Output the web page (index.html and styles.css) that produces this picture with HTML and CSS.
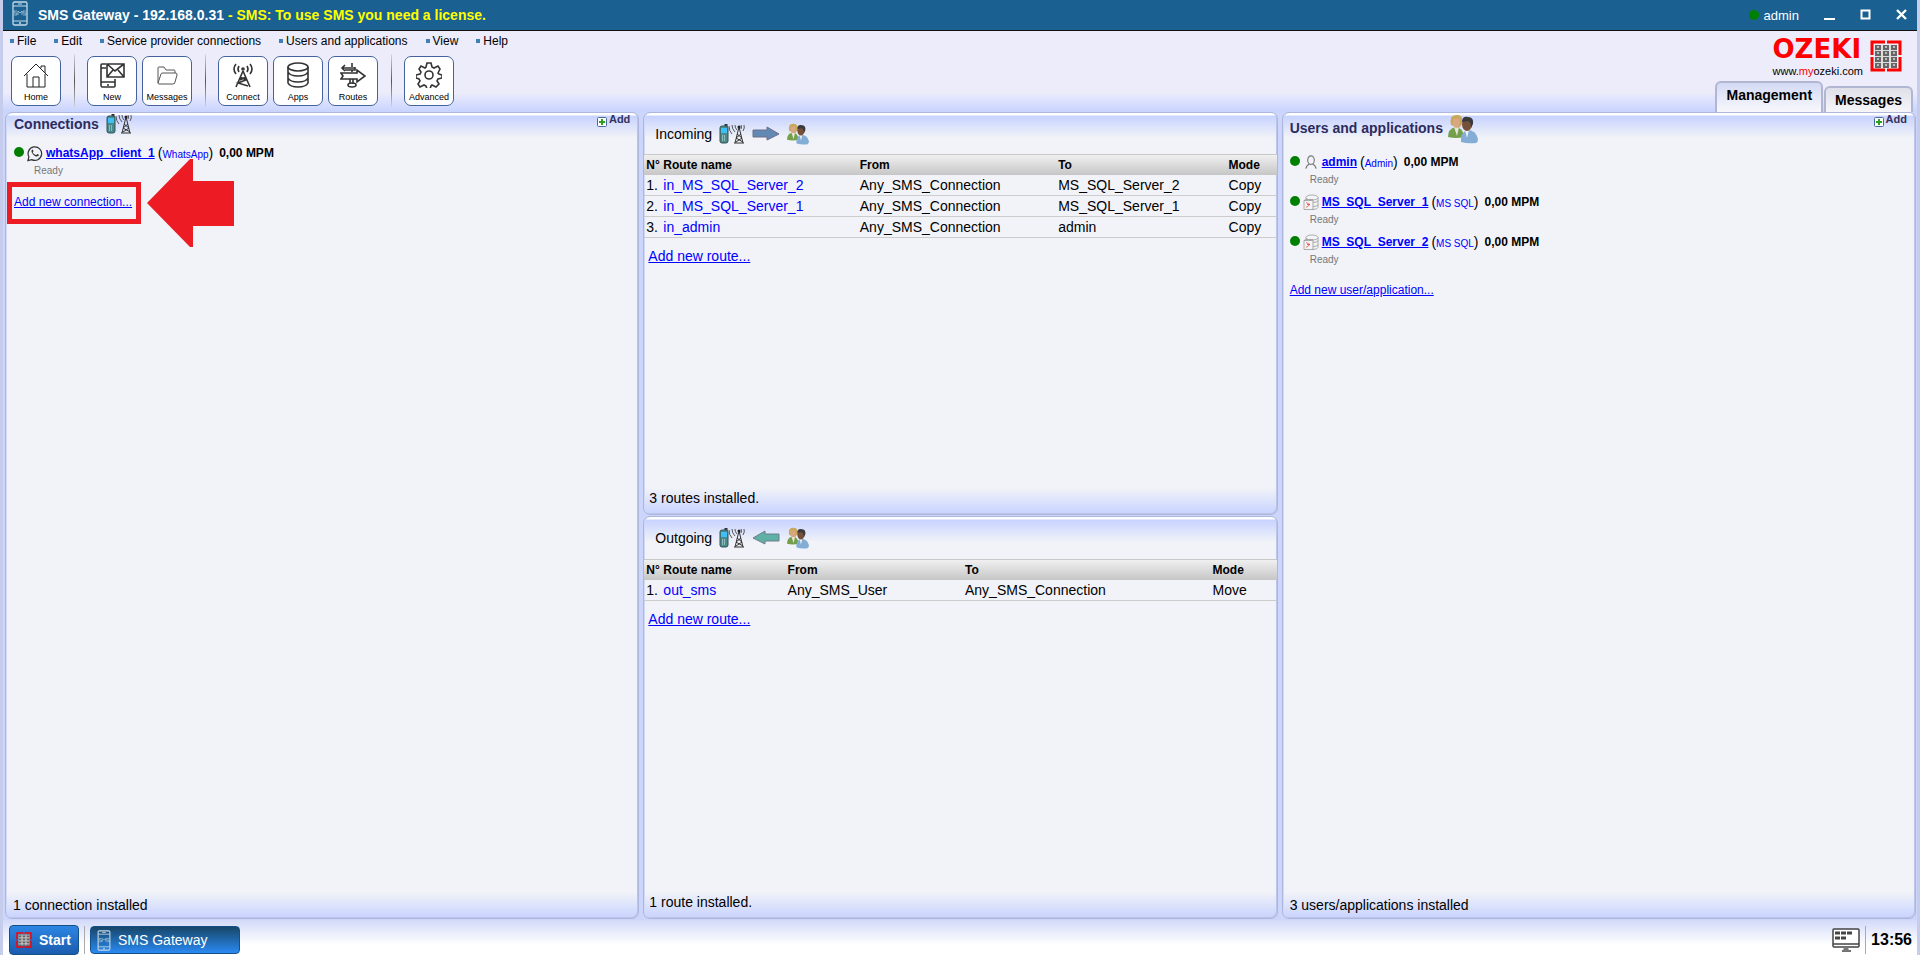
FILE: index.html
```
<!DOCTYPE html>
<html lang="en">
<head>
  <meta charset="UTF-8">
  <title>SMS Gateway</title>
  <link rel="stylesheet" href="styles.css">
</head>
<body>

  <!-- Shared drawings -->
  <svg class="defs" width="0" height="0" aria-hidden="true">
    <symbol id="tower" viewBox="0 0 26 20">
      <path d="M6 2V0h2v3" fill="#333" stroke="#333"/>
      <rect x="1" y="2" width="8" height="17" rx="2" fill="#4a8a8c" stroke="#2f5558"/>
      <rect x="2" y="4" width="6" height="5" fill="#3cc0f5"/>
      <path d="M3 12h4M3 14h4M3 16h4" stroke="#d5e8e8" stroke-dasharray="1 1"/>
      <path d="M10 2q0 5 3 8M13 1q0 4 3 7M16 1q0 3 2 5M25 1q1 3-1 6M22 1q1 2 0 4" fill="none" stroke="#555"/>
      <path d="M20 3l-4 16M20 3l4 16M18 10l5 4-6 4M22 10l-5 4 7 4M15 19h10" fill="none" stroke="#333"/>
      <circle cx="20" cy="3" r="1.500" fill="#222"/>
    </symbol>
    <symbol id="people" viewBox="0 0 30 30">
      <path d="M0 23q0-8 7-10 8 0 9 10-8 2-16 0z" fill="#74a04c"/>
      <path d="M6 13l3 9 2-9z" fill="#e6e6dc"/>
      <path d="M3 11Q1 1 8 1q8-1 6 9l-3 4z" fill="#c9a85c"/>
      <path d="M5 5q4 1 6-1 2 9-3 10-4-1-3-9z" fill="#d9a883"/>
      <path d="M13 28q-1-9 6-12 9 0 11 9 0 3-2 4-8 1-15-1z" fill="#84add6"/>
      <path d="M17 16l2 8 2-8z" fill="#eef2f8"/>
      <ellipse cx="19" cy="10" rx="5" ry="7" fill="#76513a"/>
      <path d="M14 8q0-6 6-5 6 0 5 7l-2 4q0-6-3-7z" fill="#3a3a3c"/>
    </symbol>
    <symbol id="phone" viewBox="0 0 16 25">
      <rect x="1" y="1" width="14" height="23" rx="1.500" fill="none" stroke="#c6d9e6" stroke-width="1.300"/>
      <path d="M1 5h14M1 20h14M6 3h4" fill="none" stroke="#c6d9e6"/>
      <circle cx="8" cy="22" r="1" fill="#c6d9e6"/>
      <path d="M5 10H2v2h3v2H2M6 14v-4l2 2 2-2v4M14 10h-3v2h3v2h-3" fill="none" stroke="#a9c6d8" stroke-width=".8"/>
    </symbol>
    <symbol id="keypad" viewBox="0 0 32 32">
      <path d="M5 5h22v22H5z" fill="#ddd"/>
      <path d="M15 2H2v13M17 2h13v13M2 17v13h13M30 17v13H17" fill="none" stroke="#f00" stroke-width="3"/>
      <path d="M8 5v23M16 5v23M24 5v23" stroke="#666" stroke-width="6" stroke-dasharray="5 1"/>
      <path d="M8 6v21M16 6v21M24 6v21" stroke="#bbb" stroke-width="2" stroke-dasharray="2 4"/>
    </symbol>
    <symbol id="plus" viewBox="0 0 10 10">
      <rect x=".5" y=".5" width="9" height="9" rx="1" fill="#fff" stroke="#4b6a9c"/>
      <path d="M5 2v6M2 5h6" stroke="#2ba320" stroke-width="2"/>
    </symbol>
    <symbol id="sql" viewBox="0 0 16 16">
      <g fill="#f4f4f6" stroke="#999" stroke-width=".8">
        <path d="M3 3v4h6v8q6 0 6-2V3"/>
        <ellipse cx="9" cy="3" rx="6" ry="2.500"/>
        <path d="M10 8q5 0 5-2M10 12q5 0 5-2" fill="none"/>
        <path d="M1 6h9v9H1zM1 6l2-1h7"/>
      </g>
      <path d="M3 8l4 2-4 3M7 10l-3 0" fill="none" stroke="#e35050" stroke-width=".8"/>
    </symbol>
  </svg>

  <header class="titlebar">
    <svg class="title-icon"><use href="#phone"/></svg>
    <h1>SMS Gateway - 192.168.0.31 <span>- SMS: To use SMS you need a license.</span></h1>
    <div class="session"><i class="dot"></i>admin</div>
    <button class="win" aria-label="Minimize"><svg width="12" height="12"><path d="M0 10h11" stroke="#fff" stroke-width="2"/></svg></button>
    <button class="win" aria-label="Maximize"><svg width="12" height="12"><rect x="1.500" y="1.500" width="8" height="8" fill="none" stroke="#fff" stroke-width="2"/></svg></button>
    <button class="win" aria-label="Close"><svg width="12" height="12"><path d="M1 1l9 9M10 1l-9 9" stroke="#fff" stroke-width="2.400"/></svg></button>
  </header>

  <div class="top">
    <div class="top-left">
      <nav class="menu">
        <a href="#">File</a>
        <a href="#">Edit</a>
        <a href="#">Service provider connections</a>
        <a href="#">Users and applications</a>
        <a href="#">View</a>
        <a href="#">Help</a>
      </nav>
      <div class="toolbar">
        <button>
          <svg viewBox="0 0 26 26"><path d="M1 14L13 2l12 12M4 12v13h18V12M10 25V15h6v10M18 6V4h4v7"/></svg>
          Home
        </button>
        <i class="sep"></i>
        <button>
          <svg viewBox="0 0 26 26" class="bold"><path d="M7 2H3q-1 0-1 1v20q0 2 1 2h12q1 0 1-1v-7M2 20h14M2 6h5M8 2h17v13H8zM8 2l8 7 9-7M8 15l6-7M25 15l-6-7M8 23h2"/></svg>
          New
        </button>
        <button>
          <svg viewBox="0 0 26 26" class="light"><path d="M4 21V6q0-1 1-1h5l2 3h8q1 0 1 1v2M4 21l3-9q0-1 2-1h13q1 0 1 2l-2 7q0 2-2 2H5q-1 0-1-1z"/></svg>
          Messages
        </button>
        <i class="sep"></i>
        <button>
          <svg viewBox="0 0 26 26" class="bold"><path d="M13 9L6 25M13 9l7 16M10 15l6 3-8 3 10 3M16 15l-6 3M9 4q-2 3 0 6M17 4q2 3 0 6M6 2q-4 5 0 10M20 2q4 5 0 10"/><circle cx="13" cy="7" r="1"/></svg>
          Connect
        </button>
        <button>
          <svg viewBox="0 0 26 26" class="bold"><ellipse cx="13" cy="5" rx="10" ry="4"/><path d="M3 5v16q2 4 10 4t10-4V5M3 10q2 4 10 4t10-4M3 16q2 4 10 4t10-4"/></svg>
          Apps
        </button>
        <button>
          <svg viewBox="0 0 26 26" class="bold"><path d="M12 5V1M12 8v2M15 6H2M5 3L2 6l3 3M15 5v3H5M1 11h16V8l8 6-8 6v-3H1l2-3zM10 17v5M13 17v5"/><ellipse cx="12" cy="23" rx="4" ry="2"/></svg>
          Routes
        </button>
        <i class="sep"></i>
        <button>
          <svg viewBox="0 0 26 26" class="bold"><path d="M11 1h4l1 4 2 1 4-2 2 3-2 4 1 1 3 1v3l-4 1-1 2 2 3-3 3-4-2-1 1-1 3h-3l-1-3-2-1-4 2-2-3 2-3-1-2-3-1v-3l4-1 1-2-2-3 2-3 4 2 1-1z"/><circle cx="13" cy="13" r="4"/></svg>
          Advanced
        </button>
      </div>
    </div>
    <div class="top-right">
      <div class="logo">
        <div>
          <div class="logo-name">OZEKI</div>
          <div class="logo-url">www.<span>my</span>ozeki.com</div>
        </div>
        <svg width="32" height="32"><use href="#keypad"/></svg>
      </div>
      <div class="tabs">
        <button class="tab active">Management</button>
        <button class="tab">Messages</button>
      </div>
    </div>
  </div>

  <main class="panels">
    <section class="panel">
      <div class="panel-head">
        <h2>Connections</h2>
        <svg width="26" height="20"><use href="#tower"/></svg>
        <a class="add" href="#"><svg width="10" height="10"><use href="#plus"/></svg><span>Add</span></a>
      </div>
      <div class="panel-body">
        <div class="entry">
          <i class="dot"></i>
          <svg width="16" height="17" viewBox="0 0 17 17" fill="none" stroke="#333" stroke-width="1.300"><path d="M1 16l1-4a7.200 7.200 0 1 1 3 3z"/><path d="M5 5q1-2 2 1l-1 1q1 3 4 3l1-1q3 1 1 2-2 2-5-1-3-3-2-5z" fill="#333" stroke="none"/></svg>
          <a href="#" class="name">whatsApp_client_1</a>
          <span class="kind">(<a href="#">WhatsApp</a>)</span>
          <b>0,00 MPM</b>
        </div>
        <div class="state">Ready</div>
        <div class="marked">
          <a href="#" class="add-new">Add new connection...</a>
          <i class="mark-box"></i>
          <svg class="mark-arrow" width="88" height="88"><path d="M0 44L43 0h3v22h41v45H46v21h-3z" fill="#ed1c24"/></svg>
        </div>
      </div>
      <div class="panel-foot">1 connection installed</div>
    </section>

    <div class="routes">
      <section class="panel incoming">
        <div class="route-head">
          Incoming
          <svg width="26" height="20"><use href="#tower"/></svg>
          <svg width="28" height="16"><path d="M1 4h14V1l12 7-12 6v-3H1z" fill="#6288b4" stroke="#6c6f8c"/></svg>
          <svg width="22" height="22"><use href="#people"/></svg>
        </div>
        <table>
          <colgroup><col class="c-num"><col class="in-name"><col class="in-from"><col class="in-to"><col class="in-mode"></colgroup>
          <thead><tr><th>N°</th><th>Route name</th><th>From</th><th>To</th><th>Mode</th></tr></thead>
          <tbody>
            <tr><td>1.</td><td><a href="#">in_MS_SQL_Server_2</a></td><td>Any_SMS_Connection</td><td>MS_SQL_Server_2</td><td>Copy</td></tr>
            <tr><td>2.</td><td><a href="#">in_MS_SQL_Server_1</a></td><td>Any_SMS_Connection</td><td>MS_SQL_Server_1</td><td>Copy</td></tr>
            <tr><td>3.</td><td><a href="#">in_admin</a></td><td>Any_SMS_Connection</td><td>admin</td><td>Copy</td></tr>
          </tbody>
        </table>
        <a href="#" class="add-route">Add new route...</a>
        <div class="panel-foot">3 routes installed.</div>
      </section>

      <section class="panel outgoing">
        <div class="route-head">
          Outgoing
          <svg width="26" height="20"><use href="#tower"/></svg>
          <svg width="28" height="16"><path d="M27 4H13V1L1 8l12 6v-3h14z" fill="#5fb0a6" stroke="#6c7f8c"/></svg>
          <svg width="22" height="22"><use href="#people"/></svg>
        </div>
        <table>
          <colgroup><col class="c-num"><col class="out-name"><col class="out-from"><col class="out-to"><col class="out-mode"></colgroup>
          <thead><tr><th>N°</th><th>Route name</th><th>From</th><th>To</th><th>Mode</th></tr></thead>
          <tbody>
            <tr><td>1.</td><td><a href="#">out_sms</a></td><td>Any_SMS_User</td><td>Any_SMS_Connection</td><td>Move</td></tr>
          </tbody>
        </table>
        <a href="#" class="add-route">Add new route...</a>
        <div class="panel-foot">1 route installed.</div>
      </section>
    </div>

    <section class="panel users">
      <div class="panel-head">
        <h2>Users and applications</h2>
        <svg width="30" height="30"><use href="#people"/></svg>
        <a class="add" href="#"><svg width="10" height="10"><use href="#plus"/></svg><span>Add</span></a>
      </div>
      <div class="panel-body">
        <div class="entry">
          <i class="dot"></i>
          <svg width="16" height="17" viewBox="0 0 17 17" fill="none" stroke="#777" stroke-width="1.200"><ellipse cx="8.500" cy="6" rx="3.500" ry="4.500"/><path d="M3 15q1-4 4-5M14 15q-1-4-4-5"/></svg>
          <a href="#" class="name">admin</a>
          <span class="kind">(<a href="#">Admin</a>)</span>
          <b>0,00 MPM</b>
        </div>
        <div class="state">Ready</div>
        <div class="entry">
          <i class="dot"></i>
          <svg width="16" height="17"><use href="#sql"/></svg>
          <a href="#" class="name">MS_SQL_Server_1</a>
          <span class="kind">(<a href="#">MS SQL</a>)</span>
          <b>0,00 MPM</b>
        </div>
        <div class="state">Ready</div>
        <div class="entry">
          <i class="dot"></i>
          <svg width="16" height="17"><use href="#sql"/></svg>
          <a href="#" class="name">MS_SQL_Server_2</a>
          <span class="kind">(<a href="#">MS SQL</a>)</span>
          <b>0,00 MPM</b>
        </div>
        <div class="state">Ready</div>
        <a href="#" class="add-new users-new">Add new user/application...</a>
      </div>
      <div class="panel-foot">3 users/applications installed</div>
    </section>
  </main>

  <footer class="taskbar">
    <button class="start"><svg width="16" height="16"><use href="#keypad"/></svg>Start</button>
    <i class="line"></i>
    <button class="task"><svg width="14" height="21"><use href="#phone"/></svg>SMS Gateway</button>
    <svg class="desktop" width="28" height="24" viewBox="0 0 28 24"><rect x="1" y="1" width="26" height="18" rx="1" fill="#fff" stroke="#444" stroke-width="1.500"/><path d="M1 16h26M10 23h9" stroke="#444" stroke-width="1.500"/><path d="M12 19l-1 4h6l-1-4z" fill="#777"/><path d="M3 5h17" stroke="#444" stroke-width="3" stroke-dasharray="5 1"/><path d="M3 10h11" stroke="#444" stroke-width="3" stroke-dasharray="5 1"/></svg>
    <i class="line"></i>
    <time>13:56</time>
  </footer>

</body>
</html>
```
FILE: styles.css
```
* {
  box-sizing: border-box;
}

body {
  margin: 0;
  min-height: 100vh;
  display: flex;
  flex-direction: column;
  border: solid #c6cdec;
  border-width: 0 3px;
  background: #ccd5fb;
  font-family: "Liberation Sans", Arial, sans-serif;
  font-size: 14px;
  color: #000;
}

button {
  font-family: inherit;
  cursor: pointer;
}

svg {
  display: block;
  flex: none;
}

.defs {
  position: absolute;
}

.dot {
  width: 10px;
  height: 10px;
  border-radius: 50%;
  background: green;
}

/* Title bar */
.titlebar {
  height: 31px;
  display: flex;
  align-items: center;
  padding: 0 2px 0 9px;
  background: #1a6091;
  border-bottom: 1px solid #111;
  color: #fff;
}

.title-icon {
  width: 16px;
  height: 25px;
  margin-bottom: 4px;
}

h1 {
  margin: 0 auto 0 10px;
  font-size: 14px;
  font-weight: bold;
}

h1 span {
  color: #ff0;
}

.session {
  display: flex;
  align-items: center;
  gap: 5px;
  margin-right: 8px;
  font-size: 13px;
}

.win {
  width: 26px;
  height: 26px;
  margin-left: 10px;
  padding: 7px;
  border: none;
  background: none;
}

/* Menu and toolbar */
.top {
  height: 81px;
  display: flex;
  justify-content: space-between;
  background: linear-gradient(#ececfb 76%, #c8d3ff);
}

.menu {
  display: flex;
  gap: 18px;
  padding: 2px 7px 0;
}

.menu a {
  display: flex;
  align-items: center;
  gap: 3px;
  line-height: 16px;
  font-size: 12px;
  color: #000;
  text-decoration: none;
}

.menu a::before {
  content: "";
  width: 4px;
  height: 4px;
  background: #3f7fb5;
}

.toolbar {
  display: flex;
  align-items: center;
  gap: 5px;
  padding: 5px 8px;
}

.toolbar button {
  width: 50px;
  height: 50px;
  display: flex;
  flex-direction: column;
  align-items: center;
  padding: 5px 0 0;
  border: 1px solid #44639c;
  border-radius: 7px;
  background: #fff;
  font-size: 9px;
  line-height: 14px;
  white-space: nowrap;
}

.toolbar svg {
  width: 26px;
  height: 26px;
  margin-bottom: 2px;
  fill: none;
  stroke: #222;
  stroke-width: 1;
}

.toolbar .bold {
  stroke: #333;
  stroke-width: 1.6;
}

.toolbar .light {
  stroke: #555;
}

.toolbar .sep {
  width: 1px;
  height: 54px;
  margin: 0 7px 0 8px;
  background: linear-gradient(#d8d8e6, #555, #d8d8e6);
}

.top-right {
  display: flex;
  flex-direction: column;
  justify-content: space-between;
  align-items: flex-end;
  padding: 3px 4px 0 0;
}

.logo {
  display: flex;
  align-items: center;
  gap: 7px;
  margin-right: 11px;
}

.logo-name {
  font: bold 26px/31px "DejaVu Sans", Verdana, sans-serif;
  color: #f00;
}

.logo-url {
  font-size: 11px;
  line-height: 12px;
  text-align: center;
}

.logo-url span {
  color: #f00;
}

.tabs {
  display: flex;
  align-items: flex-end;
  gap: 1px;
}

.tab {
  height: 26px;
  padding: 0 9px 1px;
  border: 2px solid #b1b6d2;
  border-bottom: none;
  border-radius: 6px 6px 0 0;
  background: linear-gradient(#dfe0e8, #f6f6fa);
  font-size: 14px;
  font-weight: bold;
  color: #000;
}

.tab.active {
  height: 31px;
  padding-bottom: 6px;
  background: linear-gradient(#d4daf5, #f8f8fc);
}

/* Panels */
.panels {
  flex: 1;
  display: grid;
  grid-template-columns: 1fr 1fr 1fr;
  gap: 4px;
  padding: 0 1px 1px 2px;
}

.routes {
  display: grid;
  grid-template-rows: 1fr 1fr;
  gap: 1px;
}

.panel {
  display: flex;
  flex-direction: column;
  border: 1px solid #adb7dc;
  border-radius: 7px;
  background: linear-gradient(#fff 2px, #c8d3ff 3px, #f1f3f8 25px, #f1f3f8 calc(100% - 26px), #c8d3ff);
  box-shadow: inset 1px 0 #d3daf4, inset -1px -1px #bcc5e6;
}

.panel-head {
  display: flex;
  align-items: center;
  gap: 7px;
  padding: 1px 8px 0;
}

h2 {
  margin: 0;
  font-size: 14px;
  color: #2b2b5e;
}

.add {
  display: flex;
  align-self: flex-start;
  gap: 2px;
  margin-left: auto;
  line-height: 10px;
  font-size: 11px;
  font-weight: bold;
  color: #33335f;
  text-decoration: none;
}

.add svg {
  margin-top: 3px;
}

.panel-body {
  padding: 10px 8px 0;
}

.users .panel-head {
  gap: 5px;
  padding-left: 7px;
}

.users h2 {
  padding-bottom: 2px;
}

.users .panel-body {
  padding: 9px 7px 0;
}

.entry {
  display: flex;
  align-items: center;
  gap: 3px;
  height: 18px;
  font-size: 12px;
}

.entry .dot {
  margin-bottom: 3px;
}

.entry b {
  margin-left: 3px;
}

.name {
  font-weight: bold;
  color: #00f;
}

.kind {
  font-size: 14px;
}

.kind a {
  font-size: 10px;
  color: #00f;
  text-decoration: none;
}

.state {
  height: 22px;
  padding: 3px 0 0 20px;
  font-size: 10px;
  line-height: 12px;
  color: #777;
}

.add-new {
  font-size: 12px;
  line-height: 16px;
  color: #00f;
}

.users-new {
  display: inline-block;
  margin-top: 9px;
}

/* Red callout round the link */
.marked {
  position: relative;
  width: max-content;
  margin-top: 9px;
}

.mark-box {
  position: absolute;
  inset: -11px -9px -14px -7px;
  border: 5px solid #ed1c24;
}

.mark-arrow {
  position: absolute;
  left: calc(100% + 15px);
  top: -34px;
}

.panel-foot {
  margin-top: auto;
  padding: 0 7px 5px;
  line-height: 16px;
}

/* Routes */
.routes .panel-foot {
  padding: 0 5px 8px;
}

.route-head {
  display: flex;
  align-items: center;
  gap: 7px;
  height: 42px;
  padding-left: 11px;
}

.incoming .route-head {
  height: 41px;
}

table {
  width: 100%;
  table-layout: fixed;
  border-collapse: collapse;
}

.c-num { width: 17px; }
.in-name { width: 196px; }
.in-from { width: 198px; }
.in-to { width: 170px; }
.in-mode { width: 50px; }
.out-name { width: 124px; }
.out-from { width: 177px; }
.out-to { width: 247px; }
.out-mode { width: 66px; }

th,
td {
  padding: 0 0 0 2px;
  text-align: left;
  white-space: nowrap;
}

th {
  height: 20px;
  border-top: 1px solid #c8c8c8;
  font-size: 12px;
}

thead tr {
  background: linear-gradient(#f0f0f0, #c6c6c6);
}

td {
  height: 21px;
  border-bottom: 1px solid #ccc;
}

td a {
  color: #00f;
  text-decoration: none;
}

.add-route {
  align-self: flex-start;
  margin: 10px 4px;
  line-height: 16px;
  color: #00f;
}

/* Task bar */
.taskbar {
  height: 35px;
  display: flex;
  align-items: center;
  gap: 5px;
  padding: 5px 5px 0 6px;
  background: linear-gradient(#d2daf9, #fff 70%);
}

.start,
.task {
  display: flex;
  align-items: center;
  gap: 7px;
  padding: 0 6px;
  border: 1px solid #154f88;
  border-radius: 4px;
  color: #fff;
  font-size: 14px;
}

.start {
  width: 70px;
  height: 30px;
  background: linear-gradient(#2c86e4, #1b5cae);
  font-weight: bold;
}

.task {
  width: 150px;
  height: 28px;
  background: linear-gradient(#174668, #2a8af2);
}

.line {
  width: 1px;
  height: 28px;
  background: #aaa;
}

.desktop {
  margin-left: auto;
}

time {
  font-size: 16px;
  font-weight: bold;
}
```
